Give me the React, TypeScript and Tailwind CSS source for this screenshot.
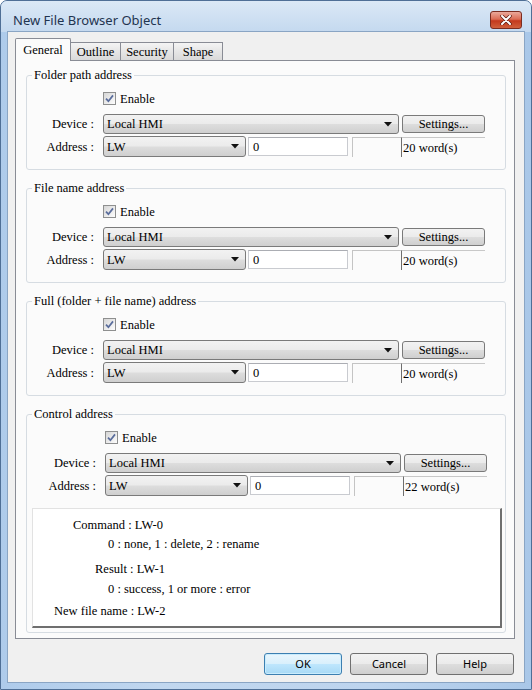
import React from 'react';

const btnBg =
  'bg-[linear-gradient(#f2f2f2_0%,#ebebeb_48%,#dddddd_52%,#cfcfcf_100%)]';

function CheckBox() {
  return (
    <span className="w-[13px] h-[13px] border border-[#8e8f8f] bg-[linear-gradient(135deg,#d6d6d6,#fdfdfd)] flex items-center justify-center">
      <svg width="11" height="11" viewBox="0 0 11 11">
        <path d="M2 5.6 L4.4 8.2 L9 2.4" fill="none" stroke="#5a6d9c" strokeWidth="1.7" />
      </svg>
    </span>
  );
}

function Combo({ width, height, text }: { width: string; height: string; text: string }) {
  return (
    <div
      className={`${width} ${height} shrink-0 flex items-center justify-between pl-[3px] pr-[6px] border border-[#7a7a7a] rounded-[3px] ${btnBg}`}
    >
      <span>{text}</span>
      <svg width="8" height="5" viewBox="0 0 8 5">
        <path d="M0 0 H8 L4 4.5 Z" fill="#111" />
      </svg>
    </div>
  );
}

function Settings() {
  return (
    <div
      className={`ml-[3px] w-[83px] h-[18px] shrink-0 flex items-center justify-center border border-[#7a7a7a] rounded-[3px] ${btnBg}`}
    >
      Settings...
    </div>
  );
}

function AddressRows({ words, shift }: { words: string; shift?: boolean }) {
  return (
    <div className={shift ? 'pl-[2px]' : ''}>
      {/* Enable */}
      <div className="mt-[10px] h-[13px] pl-[76px] flex items-center gap-[4px]">
        <CheckBox />
        <span>Enable</span>
      </div>

      {/* Device */}
      <div className="mt-[9px] h-[20px] flex items-center">
        <span className="w-[67px] text-right shrink-0">Device :</span>
        <div className="ml-[9px]">
          <Combo width="w-[296px]" height="h-[20px]" text="Local HMI" />
        </div>
        <Settings />
      </div>

      {/* Address */}
      <div className="mt-[2px] h-[21px] flex items-start">
        <span className="w-[67px] text-right shrink-0 self-center">Address :</span>
        <div className="ml-[9px]">
          <Combo width="w-[143px]" height="h-[21px]" text="LW" />
        </div>
        <div className="ml-[2px] mt-px w-[100px] h-[19px] shrink-0 bg-white border border-[#c9cbd0] border-t-[#abadb3] flex items-center pl-[4px]">
          0
        </div>
        <div className="ml-[4px] mt-px w-[49px] h-[20px] shrink-0 border-t border-l border-[#c4c4c4]" />
        <div className="mt-px w-[84px] h-[20px] shrink-0 border-t border-[#c8c8c8] border-l border-l-[#6e6e6e] pl-px flex items-center">
          {words}
        </div>
      </div>
    </div>
  );
}

function Group({ title, children }: { title: string; children: React.ReactNode }) {
  return (
    <fieldset className="border border-[#d6dce2] rounded-[3px] pb-[12px]">
      <legend className="ml-[5px] px-[2px] leading-[14px]">{title}</legend>
      {children}
    </fieldset>
  );
}

function Tab({ label, width, active }: { label: string; width: string; active?: boolean }) {
  if (active) {
    return (
      <div
        className={`${width} h-[23px] -mb-px relative z-10 bg-[#fbfbfb] border border-b-0 border-[#898c95] rounded-t-[2px] flex items-center justify-center`}
      >
        {label}
      </div>
    );
  }
  return (
    <div
      className={`${width} h-[18px] border-t border-r border-[#898c95] bg-[linear-gradient(#f4f4f4,#e6e6e6_50%,#d9d9d9)] flex items-center justify-center`}
    >
      {label}
    </div>
  );
}

function DlgButton({ label, primary }: { label: string; primary?: boolean }) {
  return (
    <div
      className={`w-[78px] h-[22px] flex items-center justify-center rounded-[3px] border ${
        primary
          ? 'border-[#3c7fb1] bg-[linear-gradient(#eaf6fd_0%,#d9f0fc_48%,#bee6fd_52%,#a7d9f5_100%)] shadow-[inset_0_0_0_1px_#c9ecfd]'
          : `border-[#707070] ${btnBg}`
      }`}
    >
      {label}
    </div>
  );
}

export default function App() {
  return (
    <div className="w-[532px] h-[690px] flex flex-col border border-[#4f6f96] rounded-t-[7px] bg-[linear-gradient(90deg,#aecbeb,#c1d7ef_30%,#bdd4ee_70%,#a9c7e8)] overflow-hidden">
      {/* title bar */}
      <div className="h-[31px] shrink-0 flex items-start justify-between pt-[10px] pl-[12px] pr-[9px] bg-[linear-gradient(#dbe8f6,#c4d9ef)]">
        <span className="font-['Noto_Sans',sans-serif] text-[13px] leading-[18px] text-[#1f3450]">
          New File Browser Object
        </span>
        <div className="w-[32px] h-[18px] rounded-[3px] border border-[#7b2c20] bg-[linear-gradient(#eaa99b_0%,#db6c55_45%,#c4391d_55%,#d0603c_100%)] flex items-center justify-center">
          <svg width="12" height="10" viewBox="0 0 12 10">
            <path d="M2 1 L10 9 M10 1 L2 9" stroke="#5b1a10" strokeWidth="3.4" strokeLinecap="round" />
            <path d="M2 1 L10 9 M10 1 L2 9" stroke="#ffffff" strokeWidth="2" strokeLinecap="round" />
          </svg>
        </div>
      </div>

      {/* client area */}
      <div className="mx-[7px] mb-[7px] h-[650px] bg-[#f0f0f0] outline outline-[#8aa5c4] flex flex-col font-['Liberation_Serif','Times_New_Roman',serif] text-[12.5px] leading-[14px] text-black">
        {/* tabs */}
        <div className="h-[28px] shrink-0 pl-[7px] flex items-end">
          <Tab label="General" width="w-[56px]" active />
          <Tab label="Outline" width="w-[50px]" />
          <Tab label="Security" width="w-[53px]" />
          <Tab label="Shape" width="w-[49px]" />
        </div>

        {/* panel */}
        <div className="ml-[7px] w-[500px] h-[579px] shrink-0 border border-[#898c95] bg-[#fbfbfb] pt-[7px] pb-[5px] pl-[10px] pr-[8px] flex flex-col gap-[11px]">
          <Group title="Folder path address">
            <AddressRows words="20 word(s)" />
          </Group>
          <Group title="File name address">
            <AddressRows words="20 word(s)" />
          </Group>
          <Group title="Full (folder + file name) address">
            <AddressRows words="20 word(s)" />
          </Group>
          <fieldset className="border border-[#d6dce2] rounded-[3px] pb-[4px]">
            <legend className="ml-[5px] px-[2px] leading-[14px]">Control address</legend>
            <AddressRows words="22 word(s)" shift />
            <div className="mt-[12px] ml-[5px] mr-[3px] h-[120px] bg-white border border-[#e2e2e2] border-r-2 border-b-2 border-r-[#6f6f6f] border-b-[#6f6f6f] pt-[9px] flex flex-col">
              <div className="pl-[40px]">Command : LW-0</div>
              <div className="mt-[5px] pl-[75px]">0 : none, 1 : delete, 2 : rename</div>
              <div className="mt-[11px] pl-[62px]">Result : LW-1</div>
              <div className="mt-[6px] pl-[75px]">0 : success, 1 or more : error</div>
              <div className="mt-[8px] pl-[21px]">New file name : LW-2</div>
            </div>
          </fieldset>
        </div>

        {/* buttons */}
        <div className="mt-[14px] h-[22px] shrink-0 flex justify-end gap-[8px] pr-[10px] font-['Noto_Sans',sans-serif] text-[11px]">
          <DlgButton label="OK" primary />
          <DlgButton label="Cancel" />
          <DlgButton label="Help" />
        </div>
      </div>
    </div>
  );
}
